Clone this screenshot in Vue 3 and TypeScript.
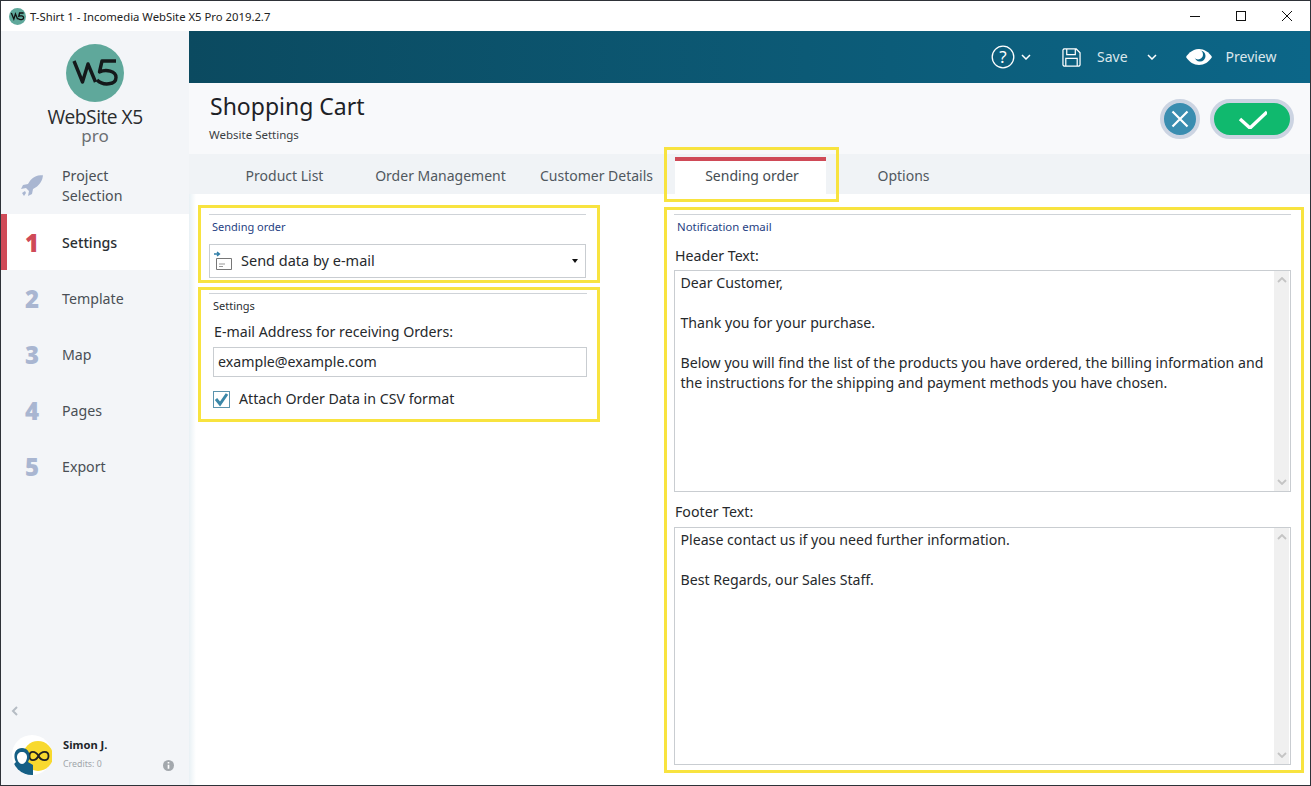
<script setup lang="ts">
const steps = [
  { n: '1', label: 'Settings', active: true },
  { n: '2', label: 'Template', active: false },
  { n: '3', label: 'Map', active: false },
  { n: '4', label: 'Pages', active: false },
  { n: '5', label: 'Export', active: false },
]
const tabs = ['Product List', 'Order Management', 'Customer Details', 'Sending order', 'Options']
</script>

<template>
  <div class="window">
    <div class="titlebar">
      <svg class="app-icon" width="17" height="17" viewBox="0 0 58 58">
        <circle cx="29" cy="29" r="29" fill="#5fa89b" />
        <path d="M8 17l8.500 21L22 20l7.500 18M50 17H36l-2.500 11c6.500-3 16.500-1 16.500 5.500C50 41 37 42 31 36" fill="none" stroke="#111" stroke-width="4.500" />
      </svg>
      <span class="title-text">T-Shirt 1 - Incomedia WebSite X5 Pro 2019.2.7</span>
      <div class="win-controls">
        <svg width="12" height="12" viewBox="0 0 12 12"><path d="M1 6.500h10" stroke="#111" /></svg>
        <svg width="12" height="12" viewBox="0 0 12 12"><rect x="1.500" y="1.500" width="9" height="9" fill="none" stroke="#111" /></svg>
        <svg width="12" height="12" viewBox="0 0 12 12"><path d="M1 1l10 10M11 1L1 11" stroke="#111" /></svg>
      </div>
    </div>

    <div class="body">
      <aside class="sidebar">
        <div class="brand">
          <svg width="58" height="58" viewBox="0 0 58 58">
            <circle cx="29" cy="29" r="29" fill="#5fa89b" />
            <path d="M8 17l8.500 21L22 20l7.500 18M50 17H36l-2.500 11c6.500-3 16.500-1 16.500 5.500C50 41 37 42 31 36" fill="none" stroke="#14181a" stroke-width="3.400" stroke-linejoin="round" />
          </svg>
          <div class="brand-name">WebSite X5</div>
          <div class="brand-pro">pro</div>
        </div>

        <div class="project">
          <svg class="rocket" width="24" height="24" viewBox="0 0 24 24">
            <path d="M23 1c-7 0-12 3-15 9l-5 1-2 4 5-1 3 3-1 5 4-2 1-5c6-3 10-8 10-15z" fill="#a9b6d1" />
            <path d="M2 19l3-2 1 2-2 3z" fill="#a9b6d1" />
          </svg>
          <span>Project<br />Selection</span>
        </div>

        <nav class="steps">
          <div v-for="s in steps" :key="s.n" class="step" :class="{ active: s.active }">
            <span class="num">{{ s.n }}</span>
            <span class="label">{{ s.label }}</span>
          </div>
        </nav>

        <div class="collapse">
          <svg width="10" height="12" viewBox="0 0 10 12"><path d="M7 2L3 6l4 4" fill="none" stroke="#b5bcc4" stroke-width="2" /></svg>
        </div>

        <div class="user">
          <svg class="avatar" width="40" height="40" viewBox="0 0 40 40">
            <defs>
              <clipPath id="avatar-clip"><circle cx="20" cy="20" r="20" /></clipPath>
            </defs>
            <circle cx="20" cy="20" r="20" fill="#fff" />
            <circle cx="26" cy="21" r="15" fill="#f8d92e" />
            <path d="M26.500 21c-3-5.500-9-5.500-9 0s6 5.500 9 0c3-5.500 10-5.500 10 0s-7 5.500-10 0z" fill="none" stroke="#222" stroke-width="1.800" />
            <g clip-path="url(#avatar-clip)">
              <path d="M1 40V30l3-3c-3-5-2-14 6-14s9 9 6 14l5 3v10z" fill="#155f85" />
              <path d="M5 22c0-3 2-5 5-5s5 2 5 5-2 7-5 7-5-4-5-7z" fill="#fff" />
            </g>
          </svg>
          <div class="user-info">
            <div class="user-name">Simon J.</div>
            <div class="credits">Credits: 0</div>
          </div>
          <svg class="info" width="11" height="11" viewBox="0 0 11 11">
            <circle cx="5.500" cy="5.500" r="5.500" fill="#a3a8ad" />
            <path d="M5.500 2v1.500M5.500 4.800v4" stroke="#fff" stroke-width="1.700" />
          </svg>
        </div>
      </aside>

      <main class="main">
        <header class="topbar">
          <svg class="tb-help" width="24" height="24" viewBox="0 0 24 24">
            <circle cx="12" cy="12" r="10.800" fill="none" stroke="#fff" stroke-width="1.300" />
            <text x="12" y="18" text-anchor="middle" class="q">?</text>
          </svg>
          <svg class="chev c1" width="10" height="6" viewBox="0 0 10 6"><path d="M1 1l4 4 4-4" fill="none" stroke="#fff" stroke-width="1.500" /></svg>
          <svg class="tb-save" width="19" height="19" viewBox="0 0 20 20">
            <path d="M2 1h13l4 4v13l-1 1H2l-1-1V2zM5 1v6h9V1M4 19v-8h12v8" fill="none" stroke="#fff" stroke-width="1.300" />
          </svg>
          <span class="tb-text save">Save</span>
          <svg class="chev c2" width="10" height="6" viewBox="0 0 10 6"><path d="M1 1l4 4 4-4" fill="none" stroke="#fff" stroke-width="1.500" /></svg>
          <svg class="tb-eye" width="28" height="18" viewBox="0 0 28 18">
            <path d="M1 9c3-5 8-8 13-8s10 3 13 8c-3 5-8 8-13 8S4 14 1 9z" fill="#fff" />
            <circle cx="15" cy="8" r="5.500" fill="#0c6688" />
            <circle cx="13" cy="6.500" r="5" fill="#fff" />
          </svg>
          <span class="tb-text preview">Preview</span>
        </header>

        <section class="heading">
          <div>
            <h1>Shopping Cart</h1>
            <p>Website Settings</p>
          </div>
          <div class="actions">
            <button class="btn-cancel" type="button">
              <svg width="20" height="20" viewBox="0 0 20 20"><path d="M2.500 2.500l15 15M17.500 2.500l-15 15" stroke="#fff" stroke-width="2.200" /></svg>
            </button>
            <button class="btn-ok" type="button">
              <svg width="30" height="20" viewBox="0 0 30 20"><path d="M3 10l10 9L30 3" fill="none" stroke="#fff" stroke-width="3.400" /></svg>
            </button>
          </div>
        </section>

        <div class="tabs">
          <div v-for="t in tabs" :key="t" class="tab" :class="{ active: t === 'Sending order' }">
            {{ t }}
            <span v-if="t === 'Sending order'" class="tab-mark"></span>
          </div>
        </div>

        <div class="content">
          <div class="col-left">
            <section class="box box-order">
              <div class="legend">Sending order</div>
              <div class="select">
                <svg width="22" height="22" viewBox="0 0 22 22">
                  <path d="M1 4h5M4 2l2.500 2L4 6" fill="none" stroke="#2f7ea8" stroke-width="1.300" />
                  <path d="M3.500 8.500h15v11h-15z" fill="#fff" stroke="#777" />
                  <path d="M6 14h6M6 16.500h4" stroke="#999" />
                </svg>
                <span>Send data by e-mail</span>
                <i class="caret"></i>
              </div>
            </section>
            <section class="box box-settings">
              <div class="legend dark">Settings</div>
              <label class="field-label">E-mail Address for receiving Orders:</label>
              <div class="input">example@example.com</div>
              <div class="check">
                <svg width="17" height="17" viewBox="0 0 17 17">
                  <rect x="0.500" y="0.500" width="16" height="16" fill="#fff" stroke="#5b93ad" />
                  <path d="M3 8l4 5 7-10" fill="none" stroke="#3b87a8" stroke-width="3" />
                </svg>
                <span>Attach Order Data in CSV format</span>
              </div>
            </section>
          </div>

          <section class="box col-right">
            <div class="legend">Notification email</div>
            <div class="ta-label first">Header Text:</div>
            <div class="textarea ta-header">
              <div class="ta-text">Dear Customer,<br /><br />Thank you for your purchase.<br /><br />Below you will find the list of the products you have ordered, the billing information and the instructions for the shipping and payment methods you have chosen.</div>
              <div class="scroll">
                <svg width="10" height="6" viewBox="0 0 10 6"><path d="M1 5l4-4 4 4" fill="none" stroke="#c4c4c4" stroke-width="1.800" /></svg>
                <svg width="10" height="6" viewBox="0 0 10 6"><path d="M1 1l4 4 4-4" fill="none" stroke="#c4c4c4" stroke-width="1.800" /></svg>
              </div>
            </div>
            <div class="ta-label">Footer Text:</div>
            <div class="textarea ta-footer">
              <div class="ta-text">Please contact us if you need further information.<br /><br />Best Regards, our Sales Staff.</div>
              <div class="scroll">
                <svg width="10" height="6" viewBox="0 0 10 6"><path d="M1 5l4-4 4 4" fill="none" stroke="#c4c4c4" stroke-width="1.800" /></svg>
                <svg width="10" height="6" viewBox="0 0 10 6"><path d="M1 1l4 4 4-4" fill="none" stroke="#c4c4c4" stroke-width="1.800" /></svg>
              </div>
            </div>
          </section>
        </div>
      </main>
    </div>
  </div>
</template>

<style>
html, body { margin: 0; background: #fff; overflow: hidden; }
</style>

<style scoped>
.window {
  width: 1311px;
  height: 786px;
  box-sizing: border-box;
  border: 1px solid #2e3238;
  display: flex;
  flex-direction: column;
  overflow: hidden;
  font-family: "Noto Sans", "Open Sans", sans-serif;
  color: #2a2f33;
  background: #fff;
}
.titlebar {
  height: 30px;
  flex: none;
  display: flex;
  align-items: center;
  padding-left: 8px;
  background: #fff;
}
.app-icon { margin-right: 4px; }
.title-text { font-size: 11.300px; color: #222; }
.win-controls {
  margin-left: auto;
  display: flex;
  gap: 34px;
  padding-right: 17px;
}
.body { flex: 1; display: flex; min-height: 0; }

.sidebar {
  width: 188px;
  flex: none;
  background: #f3f5f8;
  display: flex;
  flex-direction: column;
}
.brand {
  display: flex;
  flex-direction: column;
  align-items: center;
  padding-top: 13px;
}
.brand-name {
  font-family: "Open Sans", sans-serif;
  font-size: 19.200px;
  line-height: 22px;
  letter-spacing: -0.5px;
  margin-top: 4px;
  color: #2a2c2e;
}
.brand-pro {
  font-size: 17px;
  line-height: 16px;
  color: #6b6f72;
}
.project {
  display: flex;
  align-items: center;
  height: 56px;
  margin-top: 14px;
  padding-left: 19px;
  font-size: 14.200px;
  line-height: 20px;
  color: #4a4f55;
}
.rocket { margin-right: 18px; }
.steps { display: flex; flex-direction: column; }
.step {
  height: 56px;
  display: flex;
  align-items: center;
  font-size: 14.200px;
  color: #4a4f55;
}
.step .num {
  width: 61px;
  padding-left: 24px;
  box-sizing: border-box;
  font-family: "Open Sans", sans-serif;
  font-size: 24px;
  font-weight: 800;
  color: #a9b6d1;
}
.step.active {
  background: #fff;
  box-shadow: inset 6px 0 0 #cf4a57;
  color: #2a2f33;
  font-weight: 500;
}
.step.active .num { color: #cf4a57; }
.collapse { margin-top: auto; padding-left: 9px; line-height: 0; }
.user {
  display: flex;
  align-items: center;
  height: 40px;
  margin: 18px 0 10px 11px;
  position: relative;
}
.user-info { margin-left: 11px; margin-top: -1px; }
.user-name { font-size: 11.200px; font-weight: 700; line-height: 16px; color: #22262a; }
.credits { font-size: 8.800px; line-height: 16px; color: #a0a5aa; margin-top: 3px; }
.info { margin-left: auto; margin-right: 15px; margin-top: 20px; }

.main { flex: 1; min-width: 0; display: flex; flex-direction: column; }
.topbar {
  height: 52px;
  flex: none;
  display: flex;
  align-items: center;
  background: linear-gradient(90deg, #0b4a60 0%, #0c5a76 55%, #0c6688 100%);
  color: #dbe7ec;
  padding-left: 802px;
}
.tb-text { font-size: 14px; margin-bottom: 2px; }
.q { font-family: "Noto Sans", sans-serif; font-size: 17px; fill: #fff; }
.c1 { margin-left: 6px; }
.tb-save { margin-left: 31px; }
.save { margin-left: 16px; }
.c2 { margin-left: 19px; }
.tb-eye { margin-left: 28px; }
.preview { margin-left: 13px; }

.heading {
  height: 71px;
  flex: none;
  background: #f8f9fb;
  display: flex;
  justify-content: space-between;
  padding: 0 16px 0 21px;
  box-sizing: border-box;
}
.heading h1 {
  margin: 6px 0 0;
  font-size: 23px;
  line-height: 34px;
  font-weight: 400;
  color: #1d2126;
}
.heading p {
  margin: 4px 0 0 -1px;
  font-size: 11.500px;
  line-height: 16px;
  color: #3a3f44;
}
.actions { display: flex; gap: 10px; padding-top: 16px; align-items: flex-start; }
.btn-cancel, .btn-ok {
  border: 4px solid #ccd4e2;
  padding: 0;
  height: 40px;
  box-sizing: border-box;
  border-radius: 20px;
  display: flex;
  align-items: center;
  justify-content: center;
}
.btn-cancel { width: 40px; background: #3a8db0; }
.btn-ok { width: 84px; background: #10b96e; }

.tabs {
  height: 40px;
  flex: none;
  background: #f0f3f6;
  display: flex;
  gap: 5px;
  padding-left: 20px;
  box-sizing: border-box;
}
.tab {
  width: 151px;
  text-align: center;
  font-size: 14px;
  line-height: 44px;
  color: #50585f;
  position: relative;
  white-space: nowrap;
  box-sizing: border-box;
}
.tab.active {
  margin: 3px -3px 0 -2px;
  padding-left: 3px;
  line-height: 29px;
  background: #fff;
  border-top: 4px solid #cf4a57;
  height: 37px;
  color: #454c52;
}
.tab-mark {
  position: absolute;
  left: -11px;
  right: -13px;
  top: -14px;
  bottom: -8px;
  border: 3px solid #f8e33f;
  pointer-events: none;
}

.content {
  flex: 1;
  min-height: 0;
  display: flex;
  background: linear-gradient(90deg, #e9f1f5 0, #fff 7px);
  padding-left: 9px;
}
.col-left { width: 402px; flex: none; padding-top: 11px; }
.box { border: 3px solid #f8e33f; box-sizing: border-box; }
.legend {
  border-top: 1px solid #cfd3d8;
  font-size: 11px;
  line-height: 16px;
  color: #1f3f83;
  padding-top: 4px;
}
.legend.dark { color: #2a2f33; }
.box-order { height: 78px; padding: 6px 11px 0 8px; }
.box-order .legend { padding-left: 3px; }
.select {
  margin-top: 9px;
  height: 34px;
  box-sizing: border-box;
  border: 1px solid #c9cdd1;
  display: flex;
  align-items: center;
  font-size: 14.500px;
  line-height: 18px;
  color: #26292c;
  padding: 0 7px 2px 3px;
}
.select svg { margin-top: 2px; }
.select span { margin-left: 6px; }
.caret {
  margin-left: auto;
  width: 0;
  height: 0;
  margin-top: 2px;
  border-left: 3.500px solid transparent;
  border-right: 3.500px solid transparent;
  border-top: 4px solid #111;
}
.box-settings {
  margin-top: 4px;
  height: 135px;
  padding: 3px 10px 0 8px;
}
.box-settings .legend { padding-left: 4px; padding-top: 4px; }
.field-label {
  display: block;
  margin: 9px 0 0 5px;
  font-size: 14.200px;
  line-height: 18px;
  color: #26292c;
}
.input {
  margin: 6px 0 0 4px;
  height: 30px;
  box-sizing: border-box;
  border: 1px solid #c9cdd1;
  font-size: 14.200px;
  line-height: 27px;
  padding-left: 4px;
  color: #26292c;
}
.check {
  display: flex;
  align-items: center;
  gap: 9px;
  margin: 13px 0 0 4px;
  font-size: 14.200px;
  line-height: 18px;
  color: #26292c;
}
.col-right {
  width: 640px;
  margin-left: 64px;
  margin-top: 13px;
  height: 566px;
  padding: 4px 10px 0 7px;
}
.col-right .legend { padding-left: 3px; font-size: 11.400px; }
.ta-label {
  font-size: 14.200px;
  line-height: 18px;
  margin-left: 1px;
  color: #26292c;
}
.ta-label.first { margin-top: 12px; margin-bottom: 5px; }
.ta-label:not(.first) { margin-top: 11px; margin-bottom: 6px; }
.textarea {
  display: flex;
  border: 1px solid #c9cdd1;
  box-sizing: border-box;
  padding-right: 1px;
  width: 617px;
}
.ta-header { height: 222px; }
.ta-footer { height: 238px; }
.ta-text {
  flex: 1;
  padding: 2px 6px 0 5.500px;
  font-size: 14.150px;
  line-height: 20px;
  color: #26292c;
}
.scroll {
  width: 15px;
  flex: none;
  background: #f0f0f0;
  display: flex;
  flex-direction: column;
  justify-content: space-between;
  align-items: center;
  padding: 6px 0;
  box-sizing: border-box;
}
</style>
